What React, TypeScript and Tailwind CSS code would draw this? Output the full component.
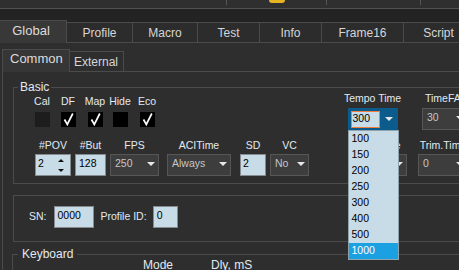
import React from 'react'

const line = 'border-[#4b4b4b]'

function Arrow() {
  return (
    <svg width="8" height="4" viewBox="0 0 8 4" className="shrink-0">
      <polygon points="0,0 8,0 4,4" fill="#e8e8e8" />
    </svg>
  )
}

function Check({ on, dim }: { on?: boolean; dim?: boolean }) {
  return (
    <div className={`w-[15px] h-[15px] ${dim ? 'bg-[#1d1d1d]' : 'bg-black'}`}>
      {on && (
        <svg width="15" height="15" viewBox="0 0 15 15">
          <path d="M3.5 7.5 L6.3 12.5 L11.8 1.5" stroke="#ffffff" strokeWidth="1.7" fill="none" />
        </svg>
      )}
    </div>
  )
}

function Select({ value, className }: { value: string; className: string }) {
  return (
    <div
      className={`h-[22px] flex items-center justify-between border border-[#575757] bg-[#3d3d3d] pl-[4px] pr-[3px] pb-[2px] text-[#c6c6c6] ${className}`}
    >
      <span>{value}</span>
      <Arrow />
    </div>
  )
}

function Input({ value, className }: { value: string; className: string }) {
  return (
    <div
      className={`h-[22px] flex items-center border border-[#858b8f] bg-[#c8dce7] pl-[2px] pb-[2px] text-black ${className}`}
    >
      {value}
    </div>
  )
}

function Column({
  label,
  className,
  labelClass,
  children,
}: {
  label: string
  className?: string
  labelClass?: string
  children: React.ReactNode
}) {
  return (
    <div className={`flex flex-col items-center shrink-0 ${className ?? ''}`}>
      <div className={`h-[12px] leading-[12px] whitespace-nowrap mb-[3px] ${labelClass ?? ''}`}>{label}</div>
      {children}
    </div>
  )
}

const checks = [
  { label: 'Cal', on: false, dim: true, cls: 'ml-[16px]' },
  { label: 'DF', on: true, cls: 'ml-[2px]' },
  { label: 'Map', on: true, cls: 'ml-[3px]' },
  { label: 'Hide', on: false, cls: 'ml-[1px]' },
  { label: 'Eco', on: true, cls: 'ml-[3px]' },
]

const tempoItems = ['100', '150', '200', '250', '300', '400', '500', '1000']

const tabs = [
  { name: 'Profile', w: 'w-[66px]' },
  { name: 'Macro', w: 'w-[65px]' },
  { name: 'Test', w: 'w-[62px]' },
  { name: 'Info', w: 'w-[62px]' },
  { name: 'Frame16', w: 'w-[82px]' },
  { name: 'Script', w: 'w-[70px]' },
]

export default function App() {
  return (
    <div className="w-[459px] h-[270px] overflow-hidden bg-[#2e2e2e] font-['Liberation_Sans',Arial,sans-serif] text-[#e2eaf2] flex flex-col">
      {/* window strip */}
      <div className="h-[8px] flex items-start shrink-0 bg-[#2f2f2f]">
        <div className="w-[226px] shrink-0" />
        <div className="w-px h-[5px] bg-[#555555] shrink-0" />
        <div className="w-[42px] shrink-0" />
        <div className="w-[16px] h-[3px] bg-[#e6b423] rounded-b-[4px] shrink-0" />
        <div className="w-[41px] shrink-0" />
        <div className="w-px h-[5px] bg-[#555555] shrink-0" />
        <div className="w-[93px] shrink-0" />
        <div className="w-px h-[5px] bg-[#555555] shrink-0" />
      </div>
      <div className="h-px bg-[#505050] shrink-0" />

      {/* main tabs */}
      <div className="h-[34px] bg-[#232323] flex items-end shrink-0">
        <div className={`w-[67px] h-[23px] shrink-0 border-t border-r ${line} bg-[#383838] text-[13px] leading-[15px] text-[#dcdcdc] flex justify-center pt-[2px] pr-[4px]`}>
          Global
        </div>
        {tabs.map((t) => (
          <div
            key={t.name}
            className={`${t.w} h-[21px] shrink-0 border-t border-r border-b ${line} bg-[#2c2c2c] text-[12px] text-[#d6d6d6] flex items-center justify-center`}
          >
            {t.name}
          </div>
        ))}
      </div>

      {/* content */}
      <div className="flex-1 flex flex-col pt-[6px] text-[10.5px]">
        <div className="h-[23px] flex items-end shrink-0">
          <div className={`ml-[2px] w-[68px] h-[23px] shrink-0 border-l border-t border-r ${line} bg-[#363636] text-[13px] leading-[15px] text-[#dcdcdc] pt-px pl-[7px]`}>
            Common
          </div>
          <div className={`w-[54px] h-[21px] shrink-0 border-t border-r border-b ${line} text-[12px] text-[#d6d6d6] flex items-center pl-[4px]`}>
            External
          </div>
          <div className={`flex-1 h-full border-b ${line}`} />
        </div>

        <div className={`ml-[2px] flex-1 border-l ${line} flex flex-col`}>
          {/* Basic */}
          <fieldset className={`ml-[10px] mt-[8px] w-[520px] shrink-0 border ${line} pb-[7px]`}>
            <legend className="ml-[4px] px-[2px] text-[12px] leading-[14px]">Basic</legend>
            <div className="flex items-start h-[36px]">
              <div className="flex pt-[1px]">
                {checks.map((c) => (
                  <div key={c.label} className={`w-[24px] flex flex-col items-center ${c.cls}`}>
                    <div className="h-[12px] leading-[12px] mb-[5px] whitespace-nowrap">{c.label}</div>
                    <Check on={c.on} dim={c.dim} />
                  </div>
                ))}
              </div>
              <div className="ml-[185px] -mt-[2px] w-[57px] flex flex-col items-center shrink-0">
                <div className="h-[12px] leading-[12px] whitespace-nowrap">Tempo Time</div>
                <div className="relative mt-[4px]">
                  <div className="w-[50px] h-[22px] bg-[#0c5b8d] flex items-center pl-[3px]">
                    <div className="w-[29px] h-[17px] border border-[#ef7f3f] bg-[#c9dde9] text-black leading-[13px] pl-px">
                      300
                    </div>
                    <div className="ml-[5px]">
                      <Arrow />
                    </div>
                  </div>
                  <div className="absolute left-0 top-full z-10 w-[51px] border border-[#8fa3ad] bg-[#c8dce7] text-black">
                    {tempoItems.map((v) => (
                      <div
                        key={v}
                        className={`h-[16px] leading-[14px] pl-[3px] ${v === '1000' ? 'bg-[#1ba1e2] text-white' : ''}`}
                      >
                        {v}
                      </div>
                    ))}
                  </div>
                </div>
              </div>
              <div className="ml-[21px] -mt-[2px] flex flex-col items-start shrink-0">
                <div className="h-[12px] leading-[12px] whitespace-nowrap pl-[3px]">TimeFA</div>
                <Select value="30" className="mt-[4px] w-[46px]" />
              </div>
            </div>

            <div className="flex items-start mt-[9px] pl-[21px]">
              <Column label="#POV">
                <div className="w-[36px] h-[22px] flex items-center justify-between border border-[#858b8f] bg-[#c8dce7] pl-[2px] pr-[6px] pb-[2px] text-black">
                  <span>2</span>
                  <svg width="6" height="13" viewBox="0 0 6 13" className="mt-[2px]">
                    <polygon points="0,3 3,0 6,3" fill="#111111" />
                    <polygon points="0,10 6,10 3,13" fill="#111111" />
                  </svg>
                </div>
              </Column>
              <Column label="#But" className="ml-[4px]">
                <Input value="128" className="w-[31px] pl-[3px]" />
              </Column>
              <Column label="FPS" className="ml-[4px]">
                <Select value="250" className="w-[49px]" />
              </Column>
              <Column label="ACITime" className="ml-[8px]">
                <Select value="Always" className="w-[64px]" />
              </Column>
              <Column label="SD" className="ml-[9px]">
                <Input value="2" className="w-[26px]" />
              </Column>
              <Column label="VC" className="ml-[4px]">
                <Select value="No" className="w-[39px]" />
              </Column>
              <Column label="Mode" className="ml-[49px]" labelClass="pl-[10px]">
                <Select value="0" className="w-[49px]" />
              </Column>
              <Column label="Trim.Time" className="ml-[11px]">
                <Select value="0" className="w-[50px]" />
              </Column>
            </div>
          </fieldset>

          {/* SN */}
          <fieldset className={`ml-[10px] mt-[11px] w-[520px] shrink-0 border ${line} pt-[10px] pb-[13px]`}>
            <div className="flex items-center pl-[15px]">
              <span>SN:</span>
              <Input value="0000" className="ml-[7px] w-[40px] pl-[3px]" />
              <span className="ml-[7px]">Profile ID:</span>
              <Input value="0" className="ml-[6px] w-[25px] pl-[3px]" />
            </div>
          </fieldset>

          {/* Keyboard */}
          <fieldset className={`ml-[9px] mt-[5px] w-[520px] shrink-0 border ${line}`}>
            <legend className="ml-[5px] px-[4px] text-[12px] leading-[14px]">Keyboard</legend>
            <div className="flex -mt-[3px] pl-[130px] text-[12px] leading-[14px]">
              <span>Mode</span>
              <span className="ml-[38px]">Dly, mS</span>
            </div>
          </fieldset>
        </div>
      </div>
    </div>
  )
}
